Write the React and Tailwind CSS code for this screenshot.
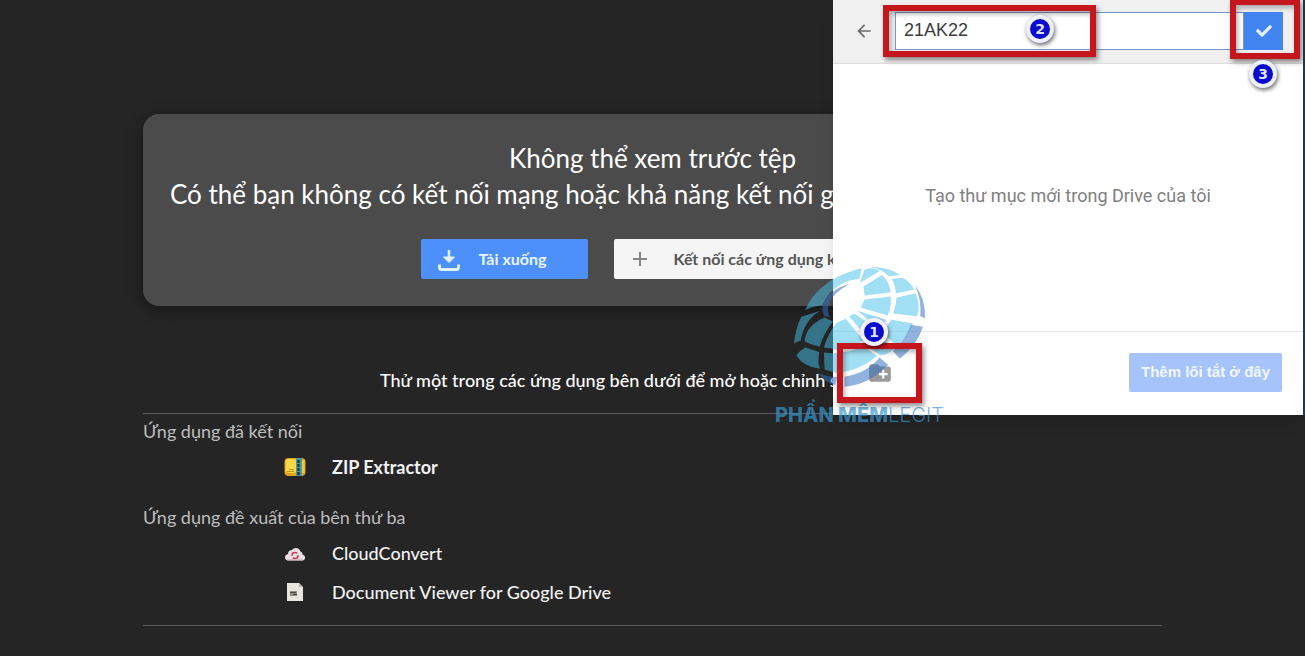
import React, { useState } from "react";
import { FaCheck } from "react-icons/fa";
import { MdArrowBack, MdCreateNewFolder } from "react-icons/md";

const ZipIcon = () => (
  <svg viewBox="0 0 22 20" className="w-[22px] h-5" aria-hidden="true">
    <rect x="0.500" y="1" width="21" height="18" rx="4" fill="#e0a31a" />
    <rect x="1.500" y="2" width="11" height="14" rx="3" fill="#f6d748" />
    <path d="M3 14.500h7M5 12.500h5" stroke="#c9951a" />
    <rect x="12" y="1" width="6" height="18" fill="#4c98a3" />
    <path d="M14.500 3v15" stroke="#1d3c42" strokeWidth="2.500" strokeDasharray="3 1" />
    <rect x="18" y="3" width="2.500" height="13" fill="#efc93c" />
  </svg>
);

const CloudIcon = () => (
  <svg viewBox="0 0 22 20" className="w-[22px] h-5" aria-hidden="true">
    <path
      d="M4 17.500C0 17 0 12 4 11C4 8 6 7 8 7C10 4 15 4 16.500 8.500C18 9 18.500 10 18.500 11.500C22 12.500 22 17 18.500 17.500Z"
      fill="#eadfe2"
    />
    <circle cx="11" cy="12.500" r="3" fill="none" stroke="#b8435a" strokeWidth="1.600" strokeDasharray="7 2" />
    <path d="M3 17h16" stroke="#c9a5ac" />
  </svg>
);

const DocumentIcon = () => (
  <svg viewBox="0 0 22 20" className="w-[22px] h-5" aria-hidden="true">
    <path d="M3 1h12l4 4v14H3z" fill="#e6e6de" />
    <path d="M15 1v4h4z" fill="#b5b5ae" />
    <rect x="6" y="9" width="7" height="5" fill="#8d8f80" />
    <path d="M6 10.500h6M9 12.500h4" stroke="#4b4d45" />
  </svg>
);

const DownloadIcon = () => (
  <svg viewBox="0 0 24 24" className="w-6 h-6" fill="none" stroke="#dff4ff" aria-hidden="true">
    <path d="M12 3v11" strokeWidth="2.500" />
    <path d="M6.500 10l5.500 5.500 5.500-5.500z" fill="#dff4ff" strokeWidth="1" />
    <path d="M2.500 17.500v3q0 2 2 2h15q2 0 2-2v-3" strokeWidth="2.800" />
  </svg>
);

const PlusIcon = () => (
  <svg viewBox="0 0 16 16" className="w-4 h-4" stroke="#858585" strokeWidth="2" aria-hidden="true">
    <path d="M8 1v14M1 8h14" />
  </svg>
);

const Badge = ({ className, children }) => (
  <span
    className={`absolute flex w-7 h-7 items-center justify-center rounded-full border-4 border-[#eef1fb] bg-[#0b0bd0] font-['DejaVu_Sans',sans-serif] text-sm font-bold leading-none text-[#dfe4ff] shadow-[1px_2px_4px_rgba(0,0,0,0.6)] ${className}`}
  >
    {children}
  </span>
);

const Frame = ({ className }) => (
  <span
    className={`absolute border-6 border-[#c4161c] shadow-[2px_3px_5px_rgba(0,0,0,0.45),inset_2px_3px_5px_rgba(0,0,0,0.3)] ${className}`}
  />
);

const Watermark = () => (
  <div className="pointer-events-none absolute left-[-58px] top-[265px] flex flex-col items-center">
    <svg viewBox="80 30 410 370" className="h-[123px] w-[137px]" aria-hidden="true">
      {/* lit side of the globe */}
      <g fill="#45c1ea" opacity="0.5">
        <path d="M122 166C145 108 205 60 292 40L284 72C240 74 196 102 178 142L172 152Q145 154 122 166Z" />
        <path d="M88 266Q92 222 110 186L166 168Q118 196 108 258Q98 260 88 266Z" />
        <path d="M180 188L205 200Q178 235 165 276Q140 270 120 260Q122 214 180 188Z" />
        <path d="M216 204L244 192L296 256Q262 282 222 284L178 278Q190 236 216 204Z" />
        <path d="M254 184L268 176L336 220Q325 240 308 250Z" />
        <path d="M300 44Q328 34 346 48L286 84Q292 66 300 44Z" />
        <path d="M297 95L353 60Q376 82 379 112L300 122Z" />
        <path d="M300 134L379 125Q382 155 370 182L288 158Z" />
        <path d="M278 167L364 195Q356 212 344 224Z" />
        <path d="M318 36Q375 36 408 60L374 64Q355 44 318 36Z" />
        <path d="M382 72L416 68Q440 84 450 104L394 116Q394 92 382 72Z" />
        <path d="M396 128L454 116Q470 152 458 184L386 176Q396 152 396 128Z" />
        <path d="M380 194L446 206Q432 242 398 274L352 232Q370 216 380 194Z" />
        <path d="M340 242L388 282Q366 304 346 300L306 272Z" />
        <path d="M95 302Q106 286 122 278L164 292Q158 325 166 342Q116 336 95 302Z" />
        <path d="M178 293Q240 302 294 274L338 304Q282 350 216 355L180 344Z" />
      </g>
      {/* rim */}
      <g fill="#2f6fc0" opacity="0.52">
        <path d="M452 92Q484 130 482 190L468 184Q472 134 452 92Z" />
        <path d="M440 210L476 216Q458 272 406 312L385 288Q424 256 440 210Z" />
        <path d="M345 308L371 330Q310 392 240 396V366Q310 354 345 308Z" />
        <path d="M160 354Q190 367 218 367L212 391Q182 386 160 354Z" />
        <path d="M180 186Q160 150 200 115Q225 93 254 88Q202 116 192 150Q187 170 196 186Z" />
      </g>
    </svg>
    <div className="font-[Inter,sans-serif] text-xl leading-[54px] whitespace-nowrap text-[#3897cf]/70">
      <span className="font-extrabold">PHẦN MỀM</span>
      <span className="font-light">LEGIT</span>
    </div>
  </div>
);

const connectedApps = [{ name: "ZIP Extractor", icon: <ZipIcon />, bold: true }];

const suggestedApps = [
  { name: "CloudConvert", icon: <CloudIcon /> },
  { name: "Document Viewer for Google Drive", icon: <DocumentIcon /> },
];

const AppGroup = ({ title, apps }) => (
  <div>
    <h2 className="text-lg leading-[34px] text-[#bdbdbd]">{title}</h2>
    <ul>
      {apps.map((app) => (
        <li key={app.name}>
          <a href="#" className="flex h-[39px] items-center gap-[26px] pb-[2px] pl-[141px] text-lg text-[#f2f2f2]">
            {app.icon}
            <span className={app.bold ? "font-bold" : "font-medium"}>{app.name}</span>
          </a>
        </li>
      ))}
    </ul>
  </div>
);

const FolderDialog = () => {
  const [name, setName] = useState("21AK22");

  return (
    <section className="absolute right-0 top-0 flex w-[472px] flex-col border-r-2 border-[#26384f] bg-white font-['Liberation_Sans',sans-serif] shadow-lg">
      <header className="flex h-16 items-center border-b border-[#dedede] bg-[#f0f0f1] pb-[2px] pl-[21px] pr-5">
        <button type="button" aria-label="Back" className="mr-[21px] text-[#6b6b6b]">
          <MdArrowBack size={20} />
        </button>
        <input
          aria-label="Folder name"
          value={name}
          onChange={(e) => setName(e.target.value)}
          className="h-[38px] min-w-0 flex-1 border border-[#7595c9] bg-white px-2 text-lg text-[#3c3c3c] outline-none"
        />
        <button
          type="button"
          aria-label="Create"
          className="flex h-[38px] w-[39px] items-center justify-center bg-[#4285f0] text-[#e4f1ff]"
        >
          <FaCheck size={16} />
        </button>
      </header>

      <p className="flex h-[267px] items-center justify-center pb-1 font-[Roboto,sans-serif] text-lg text-[#808080]">
        Tạo thư mục mới trong Drive của tôi
      </p>

      <footer className="flex h-[84px] items-center justify-between border-t border-[#e8e8e8] pb-[2px] pl-[34px] pr-[21px]">
        <button type="button" aria-label="New folder" className="text-[#9a9a9a]">
          <MdCreateNewFolder size={26} />
        </button>
        <button type="button" className="h-[39px] rounded-xs bg-[#a6c4fb] px-3 text-[15px] font-bold text-[#f0f8ff]">
          Thêm lối tắt ở đây
        </button>
      </footer>

      <Watermark />

      {/* step markers */}
      <Frame className="left-[50px] top-[5px] h-[52px] w-[213px]" />
      <Frame className="-top-px right-[3px] h-[60px] w-[70px]" />
      <Frame className="left-1 top-[343px] h-[60px] w-[85px]" />
      <Badge className="left-[27px] top-[318px]">1</Badge>
      <Badge className="left-[193px] top-[15px]">2</Badge>
      <Badge className="right-[26px] top-[60px]">3</Badge>
    </section>
  );
};

const App = () => {
  return (
    <main className="relative min-h-screen overflow-hidden bg-[#252525] pt-[114px] font-[Lato,sans-serif] text-base text-white">
      <div className="mx-auto max-w-[1019px]">
        <div className="rounded-2xl bg-[#4b4b4b] pb-[27px] pt-[26px] shadow-[0_4px_16px_rgba(0,0,0,0.4)]">
          <h1 className="text-center text-[26px] leading-9">Không thể xem trước tệp</h1>
          <p className="whitespace-nowrap pl-[27px] text-[26px] leading-9">
            Có thể bạn không có kết nối mạng hoặc khả năng kết nối g
          </p>
          <div className="mt-[27px] flex justify-center gap-[26px]">
            <button
              type="button"
              className="flex h-10 w-[167px] items-center gap-[18px] rounded-xs bg-[#4d90fa] pl-4 font-bold text-[#e8f6ff]"
            >
              <DownloadIcon />
              Tải xuống
            </button>
            <button
              type="button"
              className="flex h-10 w-[271px] items-center gap-[26px] rounded-xs bg-[#f5f5f5] pl-[18px] font-bold text-[#555]"
            >
              <PlusIcon />
              Kết nối các ứng dụng k
            </button>
          </div>
        </div>

        <p className="mt-[60px] whitespace-nowrap pb-[19px] pl-[237px] text-lg font-medium leading-7">
          Thử một trong các ứng dụng bên dưới để mở hoặc chỉnh s
        </p>
        <div className="flex flex-col gap-[13px] border-y border-[#5a5a5a] pb-[13px]">
          <AppGroup title="Ứng dụng đã kết nối" apps={connectedApps} />
          <AppGroup title="Ứng dụng đề xuất của bên thứ ba" apps={suggestedApps} />
        </div>
      </div>

      <FolderDialog />
    </main>
  );
};

export default App;
